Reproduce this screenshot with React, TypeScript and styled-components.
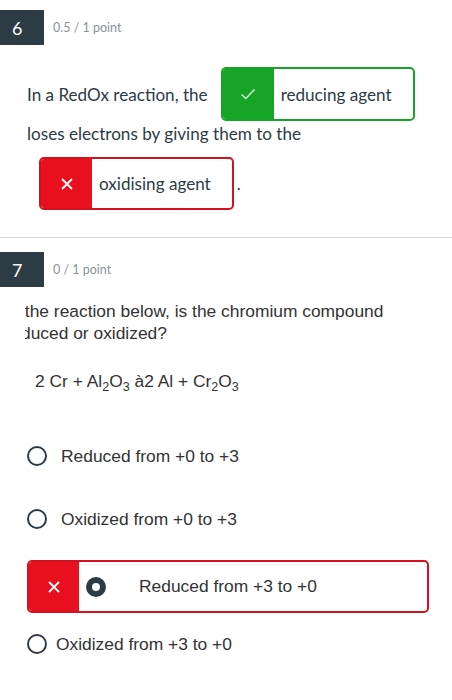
import styled, { createGlobalStyle } from "styled-components";

const GlobalStyle = createGlobalStyle`
  html, body {
    margin: 0;
    padding: 0;
    background: #ffffff;
  }
  body {
    font-family: Lato, "Liberation Sans", sans-serif;
    color: #2d3b45;
  }
`;

const Page = styled.div`
  width: 452px;
  overflow: hidden;
`;

const QuestionHeader = styled.div<{ top: number }>`
  display: flex;
  align-items: center;
  gap: 9px;
  margin-top: ${(p) => p.top}px;
`;

const Badge = styled.div`
  width: 44px;
  height: 35px;
  background: #2d3b45;
  color: #ffffff;
  font-size: 18px;
  display: flex;
  align-items: center;
  padding-left: 12px;
  box-sizing: border-box;
`;

const Points = styled.span`
  font-size: 12.5px;
  color: #8a9299;
`;

const Sentence = styled.div`
  padding-left: 27px;
  font-size: 17.1px;
  color: #2d3b45;
`;

const Row = styled.div<{ top: number; height: number }>`
  display: flex;
  align-items: center;
  margin-top: ${(p) => p.top}px;
  height: ${(p) => p.height}px;
`;

const AnswerBox = styled.div<{ tone: "right" | "wrong"; indent?: number }>`
  display: flex;
  align-items: stretch;
  height: 100%;
  margin-left: ${(p) => p.indent ?? 0}px;
  border: 2px solid ${(p) => (p.tone === "right" ? "#17a527" : "#d2131f")};
  border-radius: 5px;
  overflow: hidden;
  box-sizing: border-box;
  background: #ffffff;
`;

const Mark = styled.div<{ tone: "right" | "wrong"; width: number }>`
  width: ${(p) => p.width}px;
  flex: none;
  background: ${(p) => (p.tone === "right" ? "#17a527" : "#e8101e")};
  display: flex;
  align-items: center;
  justify-content: center;
`;

const AnswerText = styled.span`
  display: flex;
  align-items: center;
  padding: 0 21px 0 7px;
  font-size: 17.1px;
  color: #2d3b45;
`;

const Dot = styled.span`
  margin-left: 3px;
  font-size: 17px;
`;

const Divider = styled.hr`
  margin: 27px 0 0;
  border: none;
  border-top: 1px solid #d8dadc;
`;

const Prompt = styled.div`
  margin: 13px 0 0 25px;
  width: 420px;
  overflow: hidden;
  font-family: "Liberation Sans", Arial, sans-serif;
  font-size: 17.4px;
  line-height: 22px;
  color: #333333;
`;

const PromptInner = styled.div`
  margin-left: -19.5px;
`;

const Equation = styled.div`
  margin: 26px 0 0 35px;
  font-family: "Liberation Sans", Arial, sans-serif;
  font-size: 17.4px;
  line-height: 22px;
  color: #333333;

  sub {
    font-size: 12.5px;
    vertical-align: -4px;
    line-height: 0;
  }
`;

const Options = styled.div`
  display: flex;
  flex-direction: column;
  margin-top: 53px;
  font-family: "Liberation Sans", Arial, sans-serif;
  font-size: 17.4px;
  color: #333333;
`;

const Option = styled.label<{ top: number; left: number; gap: number }>`
  display: flex;
  align-items: center;
  gap: ${(p) => p.gap}px;
  height: 22px;
  margin-top: ${(p) => p.top}px;
  margin-left: ${(p) => p.left}px;
`;

const Radio = styled.span<{ checked?: boolean }>`
  width: 20px;
  height: 20px;
  flex: none;
  border-radius: 50%;
  box-sizing: border-box;
  border: ${(p) => (p.checked ? "6px" : "2px")} solid #2d3b45;
  background: #ffffff;
`;

const WrongOption = styled.div`
  display: flex;
  height: 53px;
  margin: 30px 23px 0 27px;
  border: 2px solid #d2131f;
  border-radius: 5px;
  overflow: hidden;
  box-sizing: border-box;
`;

const WrongBody = styled.div`
  display: flex;
  align-items: center;
  padding-left: 7px;
  gap: 33px;
`;

function Check() {
  return (
    <svg width="16" height="12" viewBox="0 0 16 12">
      <path d="M1.5 6.5 L5.8 10.5 L14.5 1.5" fill="none" stroke="#c9f1cb" strokeWidth="1.6" />
    </svg>
  );
}

function Cross({ size = 12 }: { size?: number }) {
  return (
    <svg width={size} height={size} viewBox="0 0 12 12">
      <path d="M1 1 L11 11 M11 1 L1 11" fill="none" stroke="#ffffff" strokeWidth="1.8" />
    </svg>
  );
}

export default function App() {
  return (
    <Page>
      <GlobalStyle />

      <QuestionHeader top={10}>
        <Badge>6</Badge>
        <Points>0.5 / 1 point</Points>
      </QuestionHeader>

      <Sentence>
        <Row top={22} height={54}>
          <span>In a RedOx reaction, the</span>
          <AnswerBox tone="right" indent={13}>
            <Mark tone="right" width={51}>
              <Check />
            </Mark>
            <AnswerText>reducing agent</AnswerText>
          </AnswerBox>
        </Row>
        <Row top={0} height={24}>
          loses electrons by giving them to the
        </Row>
        <Row top={12} height={53}>
          <AnswerBox tone="wrong" indent={12}>
            <Mark tone="wrong" width={51}>
              <Cross />
            </Mark>
            <AnswerText>oxidising agent</AnswerText>
          </AnswerBox>
          <Dot>.</Dot>
        </Row>
      </Sentence>

      <Divider />

      <QuestionHeader top={14}>
        <Badge>7</Badge>
        <Points>0 / 1 point</Points>
      </QuestionHeader>

      <Prompt>
        <PromptInner>
          In the reaction below, is the chromium compound
          <br />
          reduced or oxidized?
        </PromptInner>
      </Prompt>

      <Equation>
        2 Cr + Al<sub>2</sub>O<sub>3</sub> à2 Al + Cr<sub>2</sub>O<sub>3</sub>
      </Equation>

      <Options>
        <Option top={0} left={27} gap={14}>
          <Radio />
          Reduced from +0 to +3
        </Option>
        <Option top={41} left={27} gap={14}>
          <Radio />
          Oxidized from +0 to +3
        </Option>
        <WrongOption>
          <Mark tone="wrong" width={50}>
            <Cross />
          </Mark>
          <WrongBody>
            <Radio checked />
            <span>Reduced from +3 to +0</span>
          </WrongBody>
        </WrongOption>
        <Option top={20} left={27} gap={9}>
          <Radio />
          Oxidized from +3 to +0
        </Option>
      </Options>
    </Page>
  );
}
